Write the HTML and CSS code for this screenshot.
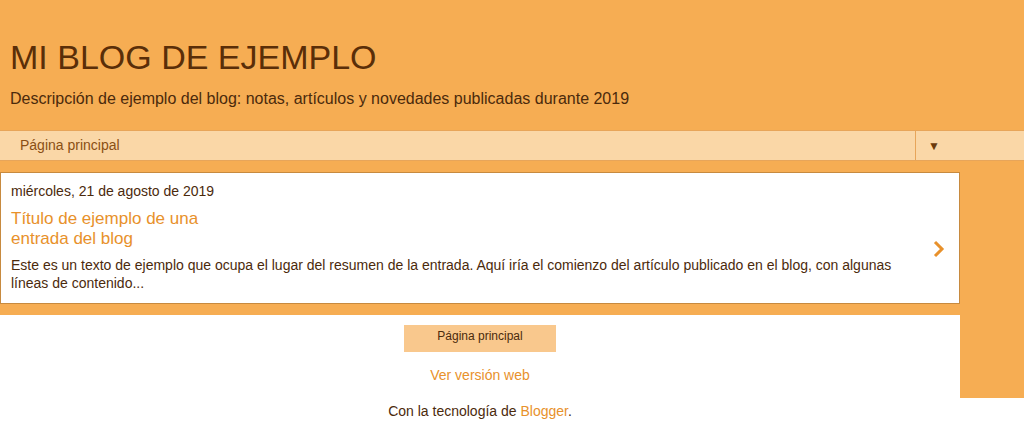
FILE: index.html
```html
<!DOCTYPE html>
<html lang="es">
<head>
    <meta charset="UTF-8">
    <meta name="viewport" content="width=device-width, initial-scale=1.0">
    <title>Mi blog de ejemplo</title>
    <link rel="stylesheet" href="styles.css">
</head>
<body>
    <div class="outer">
        <div class="header">
            <h1>MI BLOG DE EJEMPLO</h1>
            <p class="description">Descripción de ejemplo del blog: notas, artículos y novedades publicadas durante 2019</p>
        </div>

        <div class="nav">
            <span class="nav-label">Página principal</span>
            <span class="nav-arrow">&#9660;</span>
        </div>

        <div class="main">
            <div class="post">
                <div class="post-body">
                    <div class="date">miércoles, 21 de agosto de 2019</div>
                    <a class="post-title" href="#">Título de ejemplo de una entrada del blog</a>
                    <p class="snippet">Este es un texto de ejemplo que ocupa el lugar del resumen de la entrada. Aquí iría el comienzo del artículo publicado en el blog, con algunas líneas de contenido...</p>
                </div>
                <span class="chevron">
                    <svg width="12" height="18" viewBox="0 0 12 18"><path d="M2 2 L9 9 L2 16" fill="none" stroke="#e8912b" stroke-width="3"/></svg>
                </span>
            </div>

            <div class="footer">
                <a class="home-button" href="#">Página principal</a>
                <a class="web-link" href="#">Ver versión web</a>
            </div>
        </div>
    </div>

    <p class="powered">Con la tecnología de <a href="#">Blogger</a>.</p>
</body>
</html>
```

FILE: styles.css
```css
body {
    margin: 0;
    font-family: "Liberation Sans", Arial, sans-serif;
    color: #4b2a0c;
    background: #fff;
}
a {
    color: #e8912b;
    text-decoration: none;
}
.outer {
    background-color: #f6ad53;
}
.header {
    padding: 37px 10px 21px;
}
.header h1 {
    margin: 0;
    font-size: 34px;
    font-weight: normal;
    line-height: 40px;
    color: #5a2e08;
}
.description {
    margin: 12px 0 0;
    font-size: 16px;
    line-height: 20px;
}
.nav {
    display: flex;
    height: 29px;
    background-color: #fad7a7;
    border-top: 1px solid #e7a55a;
    border-bottom: 1px solid #e7a55a;
}
.nav-label {
    flex: 1;
    padding: 6px 20px 0;
    font-size: 14px;
    color: #8a4f14;
}
.nav-arrow {
    width: 109px;
    padding: 8px 0 0 12px;
    border-left: 1px solid #e7a55a;
    font-size: 12px;
    color: #6b3a0c;
    box-sizing: border-box;
}
.main {
    width: 960px;
    padding-top: 11px;
}
.post {
    display: flex;
    align-items: center;
    background: #fff;
    border: 1px solid #c78a3f;
    padding: 10px 14px 12px 10px;
    height: 132px;
    box-sizing: border-box;
}
.post-body {
    flex: 1;
}
.date {
    font-size: 14px;
    line-height: 16px;
}
.post-title {
    display: block;
    width: 215px;
    margin-top: 10px;
    font-size: 17px;
    line-height: 20px;
}
.snippet {
    margin: 7px 0 0;
    font-size: 14px;
    line-height: 18px;
    padding-right: 20px;
}
.chevron {
    width: 12px;
    padding-top: 28px;
}
.footer {
    margin-top: 11px;
    background: #fff;
    height: 83px;
    display: flex;
    flex-direction: column;
    align-items: center;
    padding-top: 10px;
    box-sizing: border-box;
}
.home-button {
    display: block;
    width: 152px;
    height: 27px;
    line-height: 22px;
    text-align: center;
    background-color: #f9c88d;
    color: #4b2a0c;
    font-size: 12px;
}
.web-link {
    margin-top: 15px;
    font-size: 14px;
}
.powered {
    width: 960px;
    margin: 5px 0 0;
    text-align: center;
    font-size: 14px;
}
```
